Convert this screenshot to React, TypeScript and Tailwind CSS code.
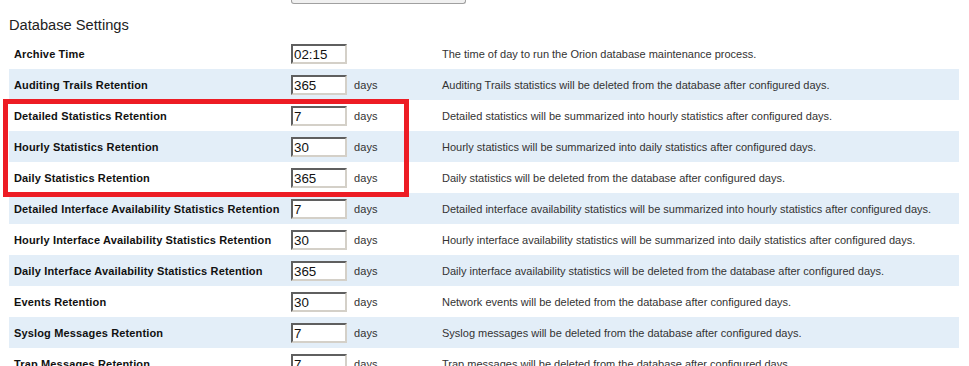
import React from 'react';

type Setting = {
  label: string;
  value: string;
  unit?: string;
  desc: string;
};

const settings: Setting[] = [
  { label: 'Archive Time', value: '02:15', desc: 'The time of day to run the Orion database maintenance process.' },
  { label: 'Auditing Trails Retention', value: '365', unit: 'days', desc: 'Auditing Trails statistics will be deleted from the database after configured days.' },
  { label: 'Detailed Statistics Retention', value: '7', unit: 'days', desc: 'Detailed statistics will be summarized into hourly statistics after configured days.' },
  { label: 'Hourly Statistics Retention', value: '30', unit: 'days', desc: 'Hourly statistics will be summarized into daily statistics after configured days.' },
  { label: 'Daily Statistics Retention', value: '365', unit: 'days', desc: 'Daily statistics will be deleted from the database after configured days.' },
  { label: 'Detailed Interface Availability Statistics Retention', value: '7', unit: 'days', desc: 'Detailed interface availability statistics will be summarized into hourly statistics after configured days.' },
  { label: 'Hourly Interface Availability Statistics Retention', value: '30', unit: 'days', desc: 'Hourly interface availability statistics will be summarized into daily statistics after configured days.' },
  { label: 'Daily Interface Availability Statistics Retention', value: '365', unit: 'days', desc: 'Daily interface availability statistics will be deleted from the database after configured days.' },
  { label: 'Events Retention', value: '30', unit: 'days', desc: 'Network events will be deleted from the database after configured days.' },
  { label: 'Syslog Messages Retention', value: '7', unit: 'days', desc: 'Syslog messages will be deleted from the database after configured days.' },
  { label: 'Trap Messages Retention', value: '7', unit: 'days', desc: 'Trap messages will be deleted from the database after configured days.' },
];

export default function App() {
  return (
    <div className="relative h-[366px] overflow-hidden bg-white font-['Liberation_Sans',Arial,sans-serif]">
      {/* bottom edge of the button above */}
      <div className="ml-[291px] h-[4px] w-[175px] rounded-b-[3px] border border-t-0 border-[#a0a0a0] bg-[#f0f0f0]" />

      <h2 className="ml-[9px] mt-[13px] text-[14.67px] leading-[17px] text-[#222]">Database Settings</h2>

      <div className="mx-[9px] mt-[4px] w-[950px]">
        {settings.map((s, i) => (
          <div
            key={s.label}
            className={`grid h-[31px] grid-cols-[282px_63px_88px_1fr] items-center ${i % 2 === 1 ? 'bg-[#e3eef8]' : 'bg-white'}`}
          >
            <span className="pl-[5px] pt-[2px] text-[11px] font-bold tracking-[0.15px] text-[#111] whitespace-nowrap">{s.label}</span>
            <input
              readOnly
              value={s.value}
              className="mt-[1px] h-[20px] w-[56px] border-2 border-t-[#5f5f5f] border-l-[#5f5f5f] border-r-[#d4d0c8] border-b-[#d4d0c8] bg-white px-[1px] text-[13.33px] text-[#111] outline-none"
            />
            <span className="pt-[2px] text-[11px] tracking-[0.1px] text-[#333]">{s.unit ?? ''}</span>
            <span className="pt-[2px] text-[11px] text-[#333] whitespace-nowrap">{s.desc}</span>
          </div>
        ))}
      </div>

      {/* highlight box */}
      <div className="pointer-events-none absolute left-[3px] top-[99px] h-[98px] w-[406px] border-[5px] border-[#ed1c24]" />
    </div>
  );
}
